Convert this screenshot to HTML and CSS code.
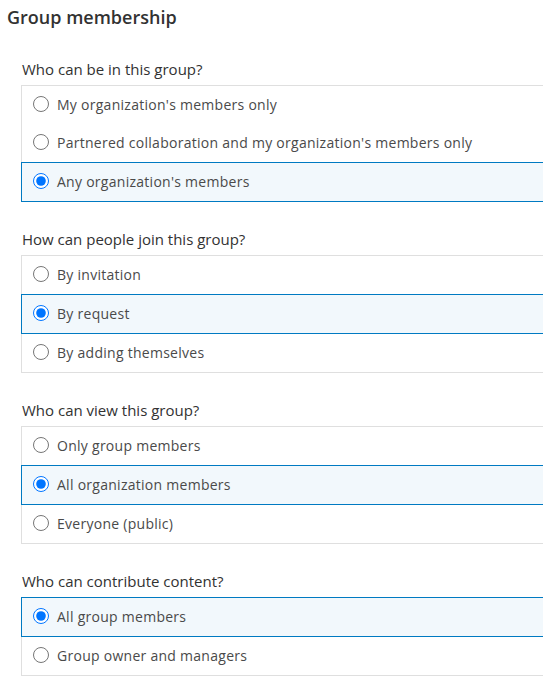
FILE: index.html
```html
<!DOCTYPE html>
<html lang="en">
<head>
<meta charset="utf-8">
<title>Group membership</title>
<link rel="stylesheet" href="styles.css">
</head>
<body>
<main class="panel">
  <h2 class="panel-title">Group membership</h2>

  <section class="setting">
    <h3 class="setting-label">Who can be in this group?</h3>
    <div class="choices" role="radiogroup">
      <label class="choice"><input type="radio" name="members"><span>My organization's members only</span></label>
      <label class="choice"><input type="radio" name="members"><span>Partnered collaboration and my organization's members only</span></label>
      <label class="choice is-selected"><input type="radio" name="members" checked><span>Any organization's members</span></label>
    </div>
  </section>

  <section class="setting">
    <h3 class="setting-label">How can people join this group?</h3>
    <div class="choices" role="radiogroup">
      <label class="choice"><input type="radio" name="join"><span>By invitation</span></label>
      <label class="choice is-selected"><input type="radio" name="join" checked><span>By request</span></label>
      <label class="choice"><input type="radio" name="join"><span>By adding themselves</span></label>
    </div>
  </section>

  <section class="setting">
    <h3 class="setting-label">Who can view this group?</h3>
    <div class="choices" role="radiogroup">
      <label class="choice"><input type="radio" name="view"><span>Only group members</span></label>
      <label class="choice is-selected"><input type="radio" name="view" checked><span>All organization members</span></label>
      <label class="choice"><input type="radio" name="view"><span>Everyone (public)</span></label>
    </div>
  </section>

  <section class="setting">
    <h3 class="setting-label">Who can contribute content?</h3>
    <div class="choices" role="radiogroup">
      <label class="choice is-selected"><input type="radio" name="contrib" checked><span>All group members</span></label>
      <label class="choice"><input type="radio" name="contrib"><span>Group owner and managers</span></label>
    </div>
  </section>
</main>
</body>
</html>
```

FILE: styles.css
```css
html, body {
  margin: 0;
  padding: 0;
  background: #ffffff;
  overflow: hidden;
}

body {
  font-family: "Open Sans", "Liberation Sans", sans-serif;
  color: #4a4a4a;
}

.panel {
  width: 580px;
  padding-left: 7px;
}

.panel-title {
  margin: 0;
  padding-top: 4px;
  height: 32px;
  font-size: 18px;
  font-weight: 600;
  line-height: 26px;
  color: #323232;
}

.setting {
  margin-left: 14px;
}

.setting-label {
  margin: 27px 0 6px 1px;
  font-size: 15px;
  font-weight: 400;
  line-height: 20px;
  color: #323232;
}

.setting:first-of-type .setting-label {
  margin-top: 23px;
}

.choices {
  border: 1px solid #dfdfdf;
  border-right: 0;
  display: flex;
  flex-direction: column;
}

.choice {
  display: flex;
  align-items: center;
  gap: 8px;
  height: 36px;
  padding: 0 0 2px 11px;
  font-size: 14px;
  letter-spacing: 0.27px;
  color: #4a4a4a;
  cursor: pointer;
}

.choice input {
  width: 16px;
  height: 16px;
  margin: 0;
  flex: none;
}

.choice.is-selected {
  background: #f2f8fc;
  border: 1px solid #007ac2;
  border-right: 0;
  margin-left: -1px;
}

.choice.is-selected:first-child {
  margin-top: -1px;
}

.choice.is-selected:last-child {
  margin-bottom: -1px;
}
```
